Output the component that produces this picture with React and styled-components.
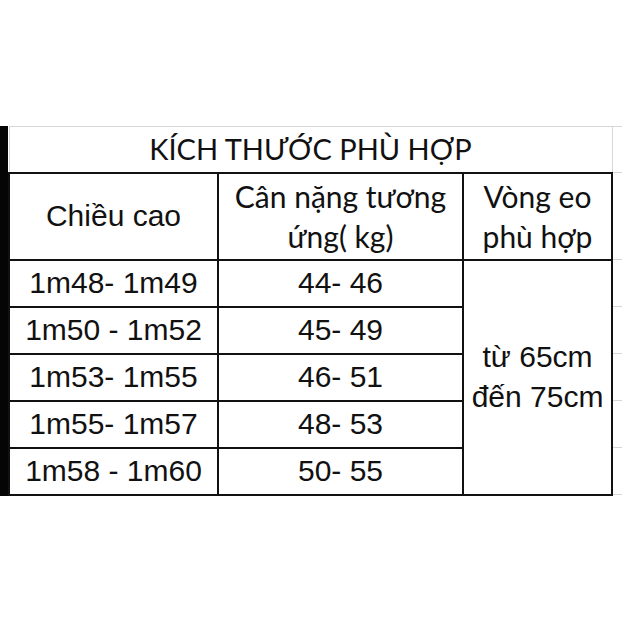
import React from 'react';
import styled, { createGlobalStyle } from 'styled-components';

const GlobalStyle = createGlobalStyle`
  html, body {
    margin: 0;
    padding: 0;
    background: #ffffff;
  }
  body {
    font-family: "Liberation Sans", Arial, sans-serif;
    color: #111111;
  }
`;

const Page = styled.div`
  width: 622px;
  height: 622px;
  padding-top: 126px;
  box-sizing: border-box;
  display: flex;
  align-items: flex-start;
`;

const SideBar = styled.div`
  width: 8px;
  height: 370px;
  background: #050505;
  flex-shrink: 0;
`;

const Sheet = styled.table`
  border-collapse: collapse;
  table-layout: fixed;
  width: 614px;
`;

const Row = styled.tr`
  height: ${(p) => p.$h}px;
`;

const Cell = styled.td`
  padding: 0;
  text-align: center;
  vertical-align: middle;
  border: 2px solid #111111;
  font-family: ${(p) => (p.$calibri ? 'Lato, "Liberation Sans", sans-serif' : '"Liberation Sans", Arial, sans-serif')};
  font-size: 30px;
  line-height: 40px;
  color: #111111;
  white-space: nowrap;
`;

const TitleCell = styled(Cell)`
  border-top: 1px solid #d6d6d6;
  border-left: 1px solid #d6d6d6;
  border-right: 1px solid #d6d6d6;
  font-size: 29px;
`;

const GridCell = styled.td`
  padding: 0;
  border-top: 1px solid #d6d6d6;
  border-bottom: 1px solid #d6d6d6;
  border-right: none;
`;

const rows = [
  ['1m48- 1m49', '44- 46'],
  ['1m50 - 1m52', '45- 49'],
  ['1m53- 1m55', '46- 51'],
  ['1m55- 1m57', '48- 53'],
  ['1m58 - 1m60', '50- 55'],
];

export default function App() {
  return (
    <>
      <GlobalStyle />
      <Page>
        <SideBar />
        <Sheet>
          <colgroup>
            <col style={{ width: 209 }} />
            <col style={{ width: 245 }} />
            <col style={{ width: 149 }} />
            <col style={{ width: 11 }} />
          </colgroup>
          <tbody>
            <Row $h={46}>
              <TitleCell colSpan={3} $calibri>KÍCH THƯỚC PHÙ HỢP</TitleCell>
              <GridCell />
            </Row>
            <Row $h={87}>
              <Cell>Chiều cao</Cell>
              <Cell $calibri>Cân nặng tương<br />ứng( kg)</Cell>
              <Cell $calibri>Vòng eo<br />phù hợp</Cell>
              <GridCell />
            </Row>
            {rows.map(([height, weight], i) => (
              <Row $h={47} key={height}>
                <Cell>{height}</Cell>
                <Cell>{weight}</Cell>
                {i === 0 && (
                  <Cell rowSpan={5}>từ 65cm<br />đến 75cm</Cell>
                )}
                <GridCell />
              </Row>
            ))}
          </tbody>
        </Sheet>
      </Page>
    </>
  );
}
